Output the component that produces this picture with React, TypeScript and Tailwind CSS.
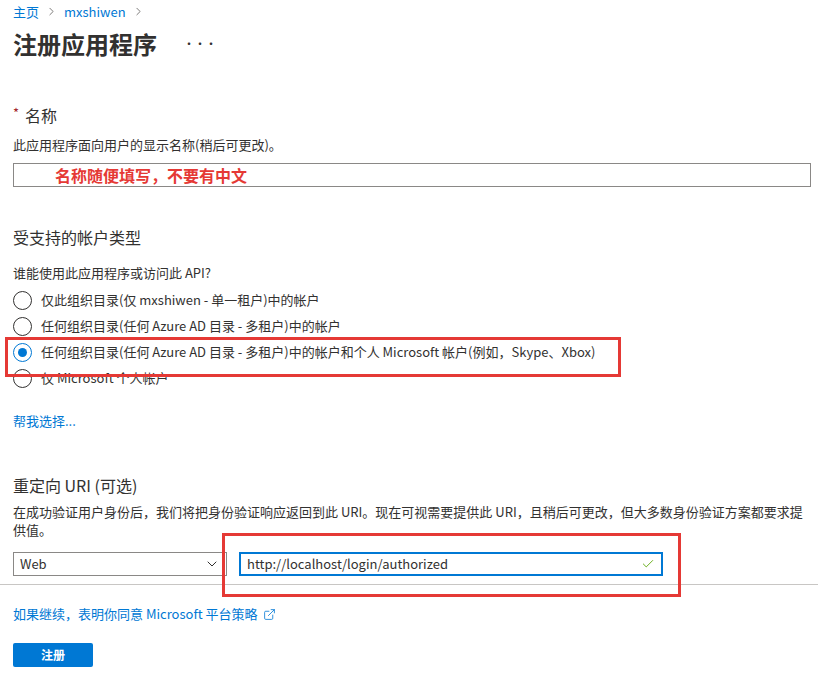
import { ChevronRight, ChevronDown, Check, ExternalLink } from "lucide-react";

const font = { fontFamily: '"Segoe UI", "Noto Sans CJK SC", sans-serif' };

const Radio = ({ checked, label }: { checked?: boolean; label: string }) => (
  <div className="flex items-center h-[26px] gap-[9px]">
    <span className={`w-[19px] h-[19px] rounded-full border flex items-center justify-center bg-white ${checked ? "border-[#0078d4]" : "border-[#323130]"}`}>
      {checked && <span className="w-[9px] h-[9px] rounded-full bg-[#0078d4]" />}
    </span>
    <span className="text-[13px] text-[#323130]">{label}</span>
  </div>
);

export default function App() {
  return (
    <div className="relative w-[818px] h-[684px] bg-white overflow-hidden text-[#323130]" style={font}>
      <div className="px-[13px]">
        {/* breadcrumb */}
        <div className="flex items-center gap-[6px] pt-[1px] h-[22px] text-[13px]">
          <span className="text-[#0078d4]">主页</span>
          <ChevronRight className="w-[13px] h-[13px] text-[#605e5c]" strokeWidth={1.5} />
          <span className="text-[#0078d4]">mxshiwen</span>
          <ChevronRight className="w-[13px] h-[13px] text-[#605e5c]" strokeWidth={1.5} />
        </div>
        <div className="flex items-center h-[44px]">
          <h1 className="text-[24px] font-bold text-[#323130]">注册应用程序</h1>
          <span className="ml-[26px] text-[12px] text-[#323130] tracking-[-1px]">···</span>
        </div>

        <div className="mt-[37px] flex items-center h-[24px] text-[16px]">
          <span className="text-[#a4262c] text-[13px] mr-[6px] self-start">*</span>名称
        </div>
        <div className="text-[13px] mt-[8px] h-[18px]">此应用程序面向用户的显示名称(稍后可更改)。</div>
        <div className="mt-[10px] h-[24px] w-[798px] border border-[#8a8886] flex items-center pl-[41px]">
          <span className="text-[#e53935] font-bold text-[16px]">名称随便填写，不要有中文</span>
        </div>

        <div className="mt-[38px] text-[16px] h-[24px]">受支持的帐户类型</div>
        <div className="mt-[14px] text-[13px] h-[18px]">谁能使用此应用程序或访问此 API?</div>
        <div className="mt-[6px]">
          <Radio label="仅此组织目录(仅 mxshiwen - 单一租户)中的帐户" />
          <Radio label="任何组织目录(任何 Azure AD 目录 - 多租户)中的帐户" />
          <Radio checked label="任何组织目录(任何 Azure AD 目录 - 多租户)中的帐户和个人 Microsoft 帐户(例如，Skype、Xbox)" />
          <Radio label="仅 Microsoft 个人帐户" />
        </div>
        <div className="mt-[20px] text-[13px] text-[#0078d4] h-[18px]">帮我选择...</div>

        <div className="mt-[44px] text-[16px] h-[24px]">重定向 URI (可选)</div>
        <div className="mt-[6px] text-[13px] leading-[18px] w-[795px]">
          在成功验证用户身份后，我们将把身份验证响应返回到此 URI。现在可视需要提供此 URI，且稍后可更改，但大多数身份验证方案都要求提供值。
        </div>
        <div className="mt-[13px] flex gap-[12px] h-[24px]">
          <div className="w-[214px] border border-[#8a8886] flex items-center justify-between px-[6px] text-[13px]">
            Web
            <ChevronDown className="w-[16px] h-[16px]" strokeWidth={1.5} />
          </div>
          <div className="w-[424px] border-2 border-[#0078d4] flex items-center justify-between px-[6px] text-[13px]">
            http://localhost/login/authorized
            <Check className="w-[14px] h-[14px] text-[#57a300]" strokeWidth={1.5} />
          </div>
        </div>
      </div>
      <div className="mt-[8px] border-t border-[#c8c6c4]" />
      <div className="px-[13px]">
        <div className="mt-[20px] flex items-center gap-[6px] text-[13px] text-[#0078d4] h-[18px]">
          如果继续，表明你同意 Microsoft 平台策略
          <ExternalLink className="w-[13px] h-[13px]" strokeWidth={1.5} />
        </div>
        <button className="mt-[20px] w-[80px] h-[24px] bg-[#0078d4] text-white text-[12px] font-bold rounded-[2px]">注册</button>
      </div>

      {/* annotation boxes */}
      <div className="absolute left-[5px] top-[337px] w-[616px] h-[40px] border-[3px] border-[#e53935]" />
      <div className="absolute left-[222px] top-[533px] w-[459px] h-[64px] border-[3px] border-[#e53935]" />
    </div>
  );
}
